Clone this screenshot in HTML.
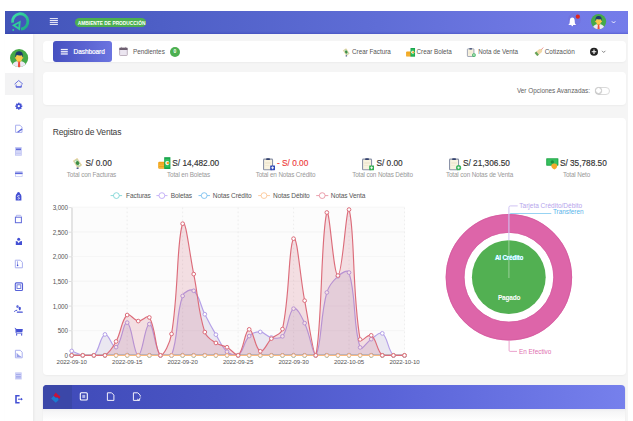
<!DOCTYPE html>
<html><head><meta charset="utf-8">
<style>
*{box-sizing:border-box;margin:0;padding:0}
html,body{width:633px;height:421px;overflow:hidden;background:#fff;font-family:"Liberation Sans",sans-serif;color:#555}
.abs{position:absolute}
#hdr{left:5px;top:11px;width:623px;height:22.5px;box-shadow:inset 0 -2px 2px -1px rgba(40,50,170,0.35);background:linear-gradient(90deg,#4254b8 0%,#4e5fc6 25%,#5f6dd6 60%,#727ae6 90%,#747cea 100%)}
#side{left:5px;top:33.5px;width:28px;height:388px;background:#fff;box-shadow:0.5px 0 2.5px rgba(0,0,0,0.06)}
#main{left:33px;top:33.5px;width:595px;height:388px;background:#f5f5f5}
.card{position:absolute;background:#fff;border-radius:4px;box-shadow:0 1px 2px rgba(0,0,0,0.04)}
#c1{left:42.6px;top:41.2px;width:583px;height:20.9px}
#c2{left:42.6px;top:72px;width:583px;height:32.7px}
#c3{left:42.6px;top:118.1px;width:583px;height:256.9px}
#c4{left:42.9px;top:408.8px;width:582px;height:20px;border-radius:0;background:linear-gradient(#eeeef0,#f6f6f7 3px,#fbfbfb 8px,#fff 12px)}
#bar{left:42.9px;top:385.3px;width:582px;height:23.5px;border-radius:4px 4px 0 0;box-shadow:0 1px 1.5px rgba(40,40,90,0.25);background:linear-gradient(90deg,#3f4ab8 0%,#4a55c4 30%,#5a64d8 60%,#7680ec 100%)}
#dash{left:53px;top:41.4px;width:59px;height:20.6px;border-radius:3px;background:linear-gradient(90deg,#4650c0,#6b74e0)}
.t{position:absolute;white-space:nowrap;line-height:1}
.sv{position:absolute;overflow:visible}
.val{position:absolute;white-space:nowrap;line-height:1;font-size:8.27px;font-weight:normal;color:#333;-webkit-text-stroke:0.15px currentColor}
.lbl{position:absolute;white-space:nowrap;line-height:1;font-size:6.35px;letter-spacing:-0.14px;color:#999;text-align:center;width:97px}
.lg{position:absolute;white-space:nowrap;line-height:1;font-size:6.55px;letter-spacing:-0.1px;color:#555}
.yl{position:absolute;white-space:nowrap;line-height:1;font-size:6.3px;letter-spacing:-0.12px;color:#555;text-align:right;width:30px}
.xl{position:absolute;white-space:nowrap;line-height:1;font-size:6.1px;letter-spacing:-0.1px;color:#555;text-align:center;width:40px}
</style></head><body>
<div id="hdr" class="abs"></div>
<div id="main" class="abs"></div>
<div id="side" class="abs"></div>
<div class="abs" style="left:5px;top:72.8px;width:28px;height:22px;background:#f3f3f4"></div>
<div id="c1" class="card"></div>
<div id="c2" class="card"></div>
<div id="c3" class="card"></div>
<div id="bar" class="abs"></div>
<div class="abs" style="left:42.9px;top:385.3px;width:29.3px;height:23.5px;border-radius:4px 0 0 0;background:#3b47a8"></div>
<div id="c4" class="card"></div>
<div id="dash" class="abs"></div>
<svg class="abs" style="left:0;top:0" width="633" height="421" viewBox="0 0 633 421">
<!-- y axis -->
<rect x="72.6" y="207.6" width="332.2" height="147.8" fill="#fcfcfc"/>
<line x1="72" y1="207.5" x2="72" y2="356" stroke="#d6d6d6" stroke-width="1.3"/>
<g stroke="#cfcfcf" stroke-width="0.7"><line x1="68.8" y1="355.35" x2="71.5" y2="355.35"/><line x1="68.8" y1="330.73" x2="71.5" y2="330.73"/><line x1="68.8" y1="306.10" x2="71.5" y2="306.10"/><line x1="68.8" y1="281.48" x2="71.5" y2="281.48"/><line x1="68.8" y1="256.85" x2="71.5" y2="256.85"/><line x1="68.8" y1="232.23" x2="71.5" y2="232.23"/><line x1="68.8" y1="207.60" x2="71.5" y2="207.60"/></g>
<line x1="71.7" y1="355.35" x2="404.5" y2="355.35" stroke="#f0f0f0" stroke-width="0.6"/>
<line x1="71.7" y1="330.65" x2="404.5" y2="330.65" stroke="#f0f0f0" stroke-width="0.6"/>
<line x1="71.7" y1="305.95" x2="404.5" y2="305.95" stroke="#f0f0f0" stroke-width="0.6"/>
<line x1="71.7" y1="281.25" x2="404.5" y2="281.25" stroke="#f0f0f0" stroke-width="0.6"/>
<line x1="71.7" y1="256.55" x2="404.5" y2="256.55" stroke="#f0f0f0" stroke-width="0.6"/>
<line x1="71.7" y1="231.86" x2="404.5" y2="231.86" stroke="#f0f0f0" stroke-width="0.6"/>
<line x1="71.7" y1="207.16" x2="404.5" y2="207.16" stroke="#f0f0f0" stroke-width="0.6"/>
<line x1="127.17" y1="207.6" x2="127.17" y2="355.35" stroke="#e6e6e6" stroke-width="0.7" stroke-dasharray="1.6,2.4"/>
<line x1="182.63" y1="207.6" x2="182.63" y2="355.35" stroke="#e6e6e6" stroke-width="0.7" stroke-dasharray="1.6,2.4"/>
<line x1="238.10" y1="207.6" x2="238.10" y2="355.35" stroke="#e6e6e6" stroke-width="0.7" stroke-dasharray="1.6,2.4"/>
<line x1="293.56" y1="207.6" x2="293.56" y2="355.35" stroke="#e6e6e6" stroke-width="0.7" stroke-dasharray="1.6,2.4"/>
<line x1="349.03" y1="207.6" x2="349.03" y2="355.35" stroke="#e6e6e6" stroke-width="0.7" stroke-dasharray="1.6,2.4"/>
<line x1="404.49" y1="207.6" x2="404.49" y2="355.35" stroke="#e6e6e6" stroke-width="0.7" stroke-dasharray="1.6,2.4"/>
<path d="M71.70,355.35C76.14,355.35 78.36,355.35 82.79,355.35C87.23,355.35 89.45,355.35 93.89,355.35C98.32,355.35 100.54,355.35 104.98,355.35C109.42,355.35 111.63,355.35 116.07,355.35C120.51,355.35 122.73,355.35 127.17,355.35C131.60,355.35 133.82,355.35 138.26,355.35C142.70,355.35 144.91,355.35 149.35,355.35C153.79,355.35 156.01,355.35 160.44,355.35C164.88,355.35 167.10,355.35 171.54,355.35C175.97,355.35 178.19,355.35 182.63,355.35C187.07,355.35 189.29,355.35 193.72,355.35C198.16,355.35 200.38,355.35 204.82,355.35C209.25,355.35 211.47,355.35 215.91,355.35C220.35,355.35 222.56,355.35 227.00,355.35C231.44,355.35 233.66,355.35 238.10,355.35C242.53,355.35 244.75,355.35 249.19,355.35C253.63,355.35 255.84,355.35 260.28,355.35C264.72,355.35 266.94,355.35 271.37,355.35C275.81,355.35 278.03,355.35 282.47,355.35C286.90,355.35 289.12,355.35 293.56,355.35C298.00,355.35 300.22,355.35 304.65,355.35C309.09,355.35 311.31,355.35 315.75,355.35C320.18,355.35 322.40,355.35 326.84,355.35C331.28,355.35 333.49,355.35 337.93,355.35C342.37,355.35 344.59,355.35 349.02,355.35C353.46,355.35 355.68,355.35 360.12,355.35C364.56,355.35 366.77,355.35 371.21,355.35C375.65,355.35 377.87,355.35 382.30,355.35C386.74,355.35 388.96,355.35 393.40,355.35C397.83,355.35 400.05,355.35 404.49,355.35" fill="none" stroke="rgb(75,192,192)" stroke-width="1.2"/>
<circle cx="71.70" cy="355.35" r="1.85" fill="#fff" stroke="rgb(75,192,192)" stroke-width="1.0"/>
<circle cx="82.79" cy="355.35" r="1.85" fill="#fff" stroke="rgb(75,192,192)" stroke-width="1.0"/>
<circle cx="93.89" cy="355.35" r="1.85" fill="#fff" stroke="rgb(75,192,192)" stroke-width="1.0"/>
<circle cx="104.98" cy="355.35" r="1.85" fill="#fff" stroke="rgb(75,192,192)" stroke-width="1.0"/>
<circle cx="116.07" cy="355.35" r="1.85" fill="#fff" stroke="rgb(75,192,192)" stroke-width="1.0"/>
<circle cx="127.17" cy="355.35" r="1.85" fill="#fff" stroke="rgb(75,192,192)" stroke-width="1.0"/>
<circle cx="138.26" cy="355.35" r="1.85" fill="#fff" stroke="rgb(75,192,192)" stroke-width="1.0"/>
<circle cx="149.35" cy="355.35" r="1.85" fill="#fff" stroke="rgb(75,192,192)" stroke-width="1.0"/>
<circle cx="160.44" cy="355.35" r="1.85" fill="#fff" stroke="rgb(75,192,192)" stroke-width="1.0"/>
<circle cx="171.54" cy="355.35" r="1.85" fill="#fff" stroke="rgb(75,192,192)" stroke-width="1.0"/>
<circle cx="182.63" cy="355.35" r="1.85" fill="#fff" stroke="rgb(75,192,192)" stroke-width="1.0"/>
<circle cx="193.72" cy="355.35" r="1.85" fill="#fff" stroke="rgb(75,192,192)" stroke-width="1.0"/>
<circle cx="204.82" cy="355.35" r="1.85" fill="#fff" stroke="rgb(75,192,192)" stroke-width="1.0"/>
<circle cx="215.91" cy="355.35" r="1.85" fill="#fff" stroke="rgb(75,192,192)" stroke-width="1.0"/>
<circle cx="227.00" cy="355.35" r="1.85" fill="#fff" stroke="rgb(75,192,192)" stroke-width="1.0"/>
<circle cx="238.10" cy="355.35" r="1.85" fill="#fff" stroke="rgb(75,192,192)" stroke-width="1.0"/>
<circle cx="249.19" cy="355.35" r="1.85" fill="#fff" stroke="rgb(75,192,192)" stroke-width="1.0"/>
<circle cx="260.28" cy="355.35" r="1.85" fill="#fff" stroke="rgb(75,192,192)" stroke-width="1.0"/>
<circle cx="271.37" cy="355.35" r="1.85" fill="#fff" stroke="rgb(75,192,192)" stroke-width="1.0"/>
<circle cx="282.47" cy="355.35" r="1.85" fill="#fff" stroke="rgb(75,192,192)" stroke-width="1.0"/>
<circle cx="293.56" cy="355.35" r="1.85" fill="#fff" stroke="rgb(75,192,192)" stroke-width="1.0"/>
<circle cx="304.65" cy="355.35" r="1.85" fill="#fff" stroke="rgb(75,192,192)" stroke-width="1.0"/>
<circle cx="315.75" cy="355.35" r="1.85" fill="#fff" stroke="rgb(75,192,192)" stroke-width="1.0"/>
<circle cx="326.84" cy="355.35" r="1.85" fill="#fff" stroke="rgb(75,192,192)" stroke-width="1.0"/>
<circle cx="337.93" cy="355.35" r="1.85" fill="#fff" stroke="rgb(75,192,192)" stroke-width="1.0"/>
<circle cx="349.02" cy="355.35" r="1.85" fill="#fff" stroke="rgb(75,192,192)" stroke-width="1.0"/>
<circle cx="360.12" cy="355.35" r="1.85" fill="#fff" stroke="rgb(75,192,192)" stroke-width="1.0"/>
<circle cx="371.21" cy="355.35" r="1.85" fill="#fff" stroke="rgb(75,192,192)" stroke-width="1.0"/>
<circle cx="382.30" cy="355.35" r="1.85" fill="#fff" stroke="rgb(75,192,192)" stroke-width="1.0"/>
<circle cx="393.40" cy="355.35" r="1.85" fill="#fff" stroke="rgb(75,192,192)" stroke-width="1.0"/>
<circle cx="404.49" cy="355.35" r="1.85" fill="#fff" stroke="rgb(75,192,192)" stroke-width="1.0"/>
<path d="M71.70,355.35C76.14,355.35 78.36,355.35 82.79,355.35C87.23,355.35 89.45,355.35 93.89,355.35C98.32,355.35 100.54,355.35 104.98,355.35C109.42,355.35 111.63,355.35 116.07,355.35C120.51,355.35 122.73,355.35 127.17,355.35C131.60,355.35 133.82,355.35 138.26,355.35C142.70,355.35 144.91,355.35 149.35,355.35C153.79,355.35 156.01,355.35 160.44,355.35C164.88,355.35 167.10,355.35 171.54,355.35C175.97,355.35 178.19,355.35 182.63,355.35C187.07,355.35 189.29,355.35 193.72,355.35C198.16,355.35 200.38,355.35 204.82,355.35C209.25,355.35 211.47,355.35 215.91,355.35C220.35,355.35 222.56,355.35 227.00,355.35C231.44,355.35 233.66,355.35 238.10,355.35C242.53,355.35 244.75,355.35 249.19,355.35C253.63,355.35 255.84,355.35 260.28,355.35C264.72,355.35 266.94,355.35 271.37,355.35C275.81,355.35 278.03,355.35 282.47,355.35C286.90,355.35 289.12,355.35 293.56,355.35C298.00,355.35 300.22,355.35 304.65,355.35C309.09,355.35 311.31,355.35 315.75,355.35C320.18,355.35 322.40,355.35 326.84,355.35C331.28,355.35 333.49,355.35 337.93,355.35C342.37,355.35 344.59,355.35 349.02,355.35C353.46,355.35 355.68,355.35 360.12,355.35C364.56,355.35 366.77,355.35 371.21,355.35C375.65,355.35 377.87,355.35 382.30,355.35C386.74,355.35 388.96,355.35 393.40,355.35C397.83,355.35 400.05,355.35 404.49,355.35" fill="none" stroke="rgb(54,162,235)" stroke-width="1.2"/>
<circle cx="71.70" cy="355.35" r="1.85" fill="#fff" stroke="rgb(54,162,235)" stroke-width="1.0"/>
<circle cx="82.79" cy="355.35" r="1.85" fill="#fff" stroke="rgb(54,162,235)" stroke-width="1.0"/>
<circle cx="93.89" cy="355.35" r="1.85" fill="#fff" stroke="rgb(54,162,235)" stroke-width="1.0"/>
<circle cx="104.98" cy="355.35" r="1.85" fill="#fff" stroke="rgb(54,162,235)" stroke-width="1.0"/>
<circle cx="116.07" cy="355.35" r="1.85" fill="#fff" stroke="rgb(54,162,235)" stroke-width="1.0"/>
<circle cx="127.17" cy="355.35" r="1.85" fill="#fff" stroke="rgb(54,162,235)" stroke-width="1.0"/>
<circle cx="138.26" cy="355.35" r="1.85" fill="#fff" stroke="rgb(54,162,235)" stroke-width="1.0"/>
<circle cx="149.35" cy="355.35" r="1.85" fill="#fff" stroke="rgb(54,162,235)" stroke-width="1.0"/>
<circle cx="160.44" cy="355.35" r="1.85" fill="#fff" stroke="rgb(54,162,235)" stroke-width="1.0"/>
<circle cx="171.54" cy="355.35" r="1.85" fill="#fff" stroke="rgb(54,162,235)" stroke-width="1.0"/>
<circle cx="182.63" cy="355.35" r="1.85" fill="#fff" stroke="rgb(54,162,235)" stroke-width="1.0"/>
<circle cx="193.72" cy="355.35" r="1.85" fill="#fff" stroke="rgb(54,162,235)" stroke-width="1.0"/>
<circle cx="204.82" cy="355.35" r="1.85" fill="#fff" stroke="rgb(54,162,235)" stroke-width="1.0"/>
<circle cx="215.91" cy="355.35" r="1.85" fill="#fff" stroke="rgb(54,162,235)" stroke-width="1.0"/>
<circle cx="227.00" cy="355.35" r="1.85" fill="#fff" stroke="rgb(54,162,235)" stroke-width="1.0"/>
<circle cx="238.10" cy="355.35" r="1.85" fill="#fff" stroke="rgb(54,162,235)" stroke-width="1.0"/>
<circle cx="249.19" cy="355.35" r="1.85" fill="#fff" stroke="rgb(54,162,235)" stroke-width="1.0"/>
<circle cx="260.28" cy="355.35" r="1.85" fill="#fff" stroke="rgb(54,162,235)" stroke-width="1.0"/>
<circle cx="271.37" cy="355.35" r="1.85" fill="#fff" stroke="rgb(54,162,235)" stroke-width="1.0"/>
<circle cx="282.47" cy="355.35" r="1.85" fill="#fff" stroke="rgb(54,162,235)" stroke-width="1.0"/>
<circle cx="293.56" cy="355.35" r="1.85" fill="#fff" stroke="rgb(54,162,235)" stroke-width="1.0"/>
<circle cx="304.65" cy="355.35" r="1.85" fill="#fff" stroke="rgb(54,162,235)" stroke-width="1.0"/>
<circle cx="315.75" cy="355.35" r="1.85" fill="#fff" stroke="rgb(54,162,235)" stroke-width="1.0"/>
<circle cx="326.84" cy="355.35" r="1.85" fill="#fff" stroke="rgb(54,162,235)" stroke-width="1.0"/>
<circle cx="337.93" cy="355.35" r="1.85" fill="#fff" stroke="rgb(54,162,235)" stroke-width="1.0"/>
<circle cx="349.02" cy="355.35" r="1.85" fill="#fff" stroke="rgb(54,162,235)" stroke-width="1.0"/>
<circle cx="360.12" cy="355.35" r="1.85" fill="#fff" stroke="rgb(54,162,235)" stroke-width="1.0"/>
<circle cx="371.21" cy="355.35" r="1.85" fill="#fff" stroke="rgb(54,162,235)" stroke-width="1.0"/>
<circle cx="382.30" cy="355.35" r="1.85" fill="#fff" stroke="rgb(54,162,235)" stroke-width="1.0"/>
<circle cx="393.40" cy="355.35" r="1.85" fill="#fff" stroke="rgb(54,162,235)" stroke-width="1.0"/>
<circle cx="404.49" cy="355.35" r="1.85" fill="#fff" stroke="rgb(54,162,235)" stroke-width="1.0"/>
<path d="M71.70,350.95C76.14,352.71 78.19,354.44 82.79,355.35C87.07,355.35 91.05,355.35 93.89,355.35C99.93,349.66 99.80,336.37 104.98,334.45C108.67,333.09 112.65,348.97 116.07,347.15C121.53,344.25 123.28,321.21 127.17,322.65C132.15,324.49 133.73,355.06 138.26,355.35C142.61,355.35 144.91,324.08 149.35,324.08C153.79,324.08 153.79,345.98 160.44,355.35C162.67,355.35 170.16,355.35 171.54,355.35C179.03,335.28 175.25,317.45 182.63,295.97C184.13,291.62 190.88,288.44 193.72,290.79C199.75,295.75 200.13,304.99 204.82,314.25C209.01,322.54 211.18,326.66 215.91,334.65C220.06,341.66 221.36,346.48 227.00,351.74C230.23,354.76 235.04,355.35 238.10,355.35C243.92,351.24 243.40,342.20 249.19,336.08C252.27,332.83 255.95,331.65 260.28,331.94C264.83,332.24 266.70,336.64 271.37,337.57C275.57,338.40 280.05,339.48 282.47,336.33C288.92,327.92 288.05,311.94 293.56,308.67C296.93,306.67 301.56,316.63 304.65,323.14C310.43,335.30 312.66,355.35 315.75,355.35C321.53,347.35 320.05,316.66 326.84,292.47C328.92,285.04 332.38,281.30 337.93,276.31C341.25,273.33 347.84,268.75 349.02,272.56C356.71,297.20 352.62,324.93 360.12,347.45C361.49,351.57 366.55,342.11 371.21,339.15C375.42,336.48 379.31,331.18 382.30,333.37C388.19,337.67 387.28,349.29 393.40,355.35C396.15,355.35 400.05,355.35 404.49,355.35L404.49,355.35L71.70,355.35Z" fill="rgba(125,105,175,0.14)"/>
<path d="M71.70,350.95C76.14,352.71 78.19,354.44 82.79,355.35C87.07,355.35 91.05,355.35 93.89,355.35C99.93,349.66 99.80,336.37 104.98,334.45C108.67,333.09 112.65,348.97 116.07,347.15C121.53,344.25 123.28,321.21 127.17,322.65C132.15,324.49 133.73,355.06 138.26,355.35C142.61,355.35 144.91,324.08 149.35,324.08C153.79,324.08 153.79,345.98 160.44,355.35C162.67,355.35 170.16,355.35 171.54,355.35C179.03,335.28 175.25,317.45 182.63,295.97C184.13,291.62 190.88,288.44 193.72,290.79C199.75,295.75 200.13,304.99 204.82,314.25C209.01,322.54 211.18,326.66 215.91,334.65C220.06,341.66 221.36,346.48 227.00,351.74C230.23,354.76 235.04,355.35 238.10,355.35C243.92,351.24 243.40,342.20 249.19,336.08C252.27,332.83 255.95,331.65 260.28,331.94C264.83,332.24 266.70,336.64 271.37,337.57C275.57,338.40 280.05,339.48 282.47,336.33C288.92,327.92 288.05,311.94 293.56,308.67C296.93,306.67 301.56,316.63 304.65,323.14C310.43,335.30 312.66,355.35 315.75,355.35C321.53,347.35 320.05,316.66 326.84,292.47C328.92,285.04 332.38,281.30 337.93,276.31C341.25,273.33 347.84,268.75 349.02,272.56C356.71,297.20 352.62,324.93 360.12,347.45C361.49,351.57 366.55,342.11 371.21,339.15C375.42,336.48 379.31,331.18 382.30,333.37C388.19,337.67 387.28,349.29 393.40,355.35C396.15,355.35 400.05,355.35 404.49,355.35" fill="none" stroke="rgb(180,160,232)" stroke-width="1.15"/>
<circle cx="71.70" cy="350.95" r="1.85" fill="#fff" stroke="rgb(180,160,232)" stroke-width="1.0"/>
<circle cx="82.79" cy="355.35" r="1.85" fill="#fff" stroke="rgb(180,160,232)" stroke-width="1.0"/>
<circle cx="93.89" cy="355.35" r="1.85" fill="#fff" stroke="rgb(180,160,232)" stroke-width="1.0"/>
<circle cx="104.98" cy="334.45" r="1.85" fill="#fff" stroke="rgb(180,160,232)" stroke-width="1.0"/>
<circle cx="116.07" cy="347.15" r="1.85" fill="#fff" stroke="rgb(180,160,232)" stroke-width="1.0"/>
<circle cx="127.17" cy="322.65" r="1.85" fill="#fff" stroke="rgb(180,160,232)" stroke-width="1.0"/>
<circle cx="138.26" cy="355.35" r="1.85" fill="#fff" stroke="rgb(180,160,232)" stroke-width="1.0"/>
<circle cx="149.35" cy="324.08" r="1.85" fill="#fff" stroke="rgb(180,160,232)" stroke-width="1.0"/>
<circle cx="160.44" cy="355.35" r="1.85" fill="#fff" stroke="rgb(180,160,232)" stroke-width="1.0"/>
<circle cx="171.54" cy="355.35" r="1.85" fill="#fff" stroke="rgb(180,160,232)" stroke-width="1.0"/>
<circle cx="182.63" cy="295.97" r="1.85" fill="#fff" stroke="rgb(180,160,232)" stroke-width="1.0"/>
<circle cx="193.72" cy="290.79" r="1.85" fill="#fff" stroke="rgb(180,160,232)" stroke-width="1.0"/>
<circle cx="204.82" cy="314.25" r="1.85" fill="#fff" stroke="rgb(180,160,232)" stroke-width="1.0"/>
<circle cx="215.91" cy="334.65" r="1.85" fill="#fff" stroke="rgb(180,160,232)" stroke-width="1.0"/>
<circle cx="227.00" cy="351.74" r="1.85" fill="#fff" stroke="rgb(180,160,232)" stroke-width="1.0"/>
<circle cx="238.10" cy="355.35" r="1.85" fill="#fff" stroke="rgb(180,160,232)" stroke-width="1.0"/>
<circle cx="249.19" cy="336.08" r="1.85" fill="#fff" stroke="rgb(180,160,232)" stroke-width="1.0"/>
<circle cx="260.28" cy="331.94" r="1.85" fill="#fff" stroke="rgb(180,160,232)" stroke-width="1.0"/>
<circle cx="271.37" cy="337.57" r="1.85" fill="#fff" stroke="rgb(180,160,232)" stroke-width="1.0"/>
<circle cx="282.47" cy="336.33" r="1.85" fill="#fff" stroke="rgb(180,160,232)" stroke-width="1.0"/>
<circle cx="293.56" cy="308.67" r="1.85" fill="#fff" stroke="rgb(180,160,232)" stroke-width="1.0"/>
<circle cx="304.65" cy="323.14" r="1.85" fill="#fff" stroke="rgb(180,160,232)" stroke-width="1.0"/>
<circle cx="315.75" cy="355.35" r="1.85" fill="#fff" stroke="rgb(180,160,232)" stroke-width="1.0"/>
<circle cx="326.84" cy="292.47" r="1.85" fill="#fff" stroke="rgb(180,160,232)" stroke-width="1.0"/>
<circle cx="337.93" cy="276.31" r="1.85" fill="#fff" stroke="rgb(180,160,232)" stroke-width="1.0"/>
<circle cx="349.02" cy="272.56" r="1.85" fill="#fff" stroke="rgb(180,160,232)" stroke-width="1.0"/>
<circle cx="360.12" cy="347.45" r="1.85" fill="#fff" stroke="rgb(180,160,232)" stroke-width="1.0"/>
<circle cx="371.21" cy="339.15" r="1.85" fill="#fff" stroke="rgb(180,160,232)" stroke-width="1.0"/>
<circle cx="382.30" cy="333.37" r="1.85" fill="#fff" stroke="rgb(180,160,232)" stroke-width="1.0"/>
<circle cx="393.40" cy="355.35" r="1.85" fill="#fff" stroke="rgb(180,160,232)" stroke-width="1.0"/>
<circle cx="404.49" cy="355.35" r="1.85" fill="#fff" stroke="rgb(180,160,232)" stroke-width="1.0"/>
<path d="M71.70,355.35C76.14,355.35 78.36,355.35 82.79,355.35C87.23,355.35 89.45,355.35 93.89,355.35C98.32,355.35 100.54,355.35 104.98,355.35C109.42,355.35 111.63,355.35 116.07,355.35C120.51,355.35 122.73,355.35 127.17,355.35C131.60,355.35 133.82,355.35 138.26,355.35C142.70,355.35 144.91,355.35 149.35,355.35C153.79,355.35 156.01,355.35 160.44,355.35C164.88,355.35 167.10,355.35 171.54,355.35C175.97,355.35 178.19,355.35 182.63,355.35C187.07,355.35 189.29,355.35 193.72,355.35C198.16,355.35 200.38,355.35 204.82,355.35C209.25,355.35 211.47,355.35 215.91,355.35C220.35,355.35 222.56,355.35 227.00,355.35C231.44,355.35 233.66,355.35 238.10,355.35C242.53,355.35 244.75,355.35 249.19,355.35C253.63,355.35 255.84,355.35 260.28,355.35C264.72,355.35 266.94,355.35 271.37,355.35C275.81,355.35 278.03,355.35 282.47,355.35C286.90,355.35 289.12,355.35 293.56,355.35C298.00,355.35 300.22,355.35 304.65,355.35C309.09,355.35 311.31,355.35 315.75,355.35C320.18,355.35 322.40,355.35 326.84,355.35C331.28,355.35 333.49,355.35 337.93,355.35C342.37,355.35 344.59,355.35 349.02,355.35C353.46,355.35 355.68,355.35 360.12,355.35C364.56,355.35 366.77,355.35 371.21,355.35C375.65,355.35 377.87,355.35 382.30,355.35C386.74,355.35 388.96,355.35 393.40,355.35C397.83,355.35 400.05,355.35 404.49,355.35" fill="none" stroke="rgb(250,190,130)" stroke-width="1.2"/>
<circle cx="71.70" cy="355.35" r="1.85" fill="#fff" stroke="rgb(250,190,130)" stroke-width="1.0"/>
<circle cx="82.79" cy="355.35" r="1.85" fill="#fff" stroke="rgb(250,190,130)" stroke-width="1.0"/>
<circle cx="93.89" cy="355.35" r="1.85" fill="#fff" stroke="rgb(250,190,130)" stroke-width="1.0"/>
<circle cx="104.98" cy="355.35" r="1.85" fill="#fff" stroke="rgb(250,190,130)" stroke-width="1.0"/>
<circle cx="116.07" cy="355.35" r="1.85" fill="#fff" stroke="rgb(250,190,130)" stroke-width="1.0"/>
<circle cx="127.17" cy="355.35" r="1.85" fill="#fff" stroke="rgb(250,190,130)" stroke-width="1.0"/>
<circle cx="138.26" cy="355.35" r="1.85" fill="#fff" stroke="rgb(250,190,130)" stroke-width="1.0"/>
<circle cx="149.35" cy="355.35" r="1.85" fill="#fff" stroke="rgb(250,190,130)" stroke-width="1.0"/>
<circle cx="160.44" cy="355.35" r="1.85" fill="#fff" stroke="rgb(250,190,130)" stroke-width="1.0"/>
<circle cx="171.54" cy="355.35" r="1.85" fill="#fff" stroke="rgb(250,190,130)" stroke-width="1.0"/>
<circle cx="182.63" cy="355.35" r="1.85" fill="#fff" stroke="rgb(250,190,130)" stroke-width="1.0"/>
<circle cx="193.72" cy="355.35" r="1.85" fill="#fff" stroke="rgb(250,190,130)" stroke-width="1.0"/>
<circle cx="204.82" cy="355.35" r="1.85" fill="#fff" stroke="rgb(250,190,130)" stroke-width="1.0"/>
<circle cx="215.91" cy="355.35" r="1.85" fill="#fff" stroke="rgb(250,190,130)" stroke-width="1.0"/>
<circle cx="227.00" cy="355.35" r="1.85" fill="#fff" stroke="rgb(250,190,130)" stroke-width="1.0"/>
<circle cx="238.10" cy="355.35" r="1.85" fill="#fff" stroke="rgb(250,190,130)" stroke-width="1.0"/>
<circle cx="249.19" cy="355.35" r="1.85" fill="#fff" stroke="rgb(250,190,130)" stroke-width="1.0"/>
<circle cx="260.28" cy="355.35" r="1.85" fill="#fff" stroke="rgb(250,190,130)" stroke-width="1.0"/>
<circle cx="271.37" cy="355.35" r="1.85" fill="#fff" stroke="rgb(250,190,130)" stroke-width="1.0"/>
<circle cx="282.47" cy="355.35" r="1.85" fill="#fff" stroke="rgb(250,190,130)" stroke-width="1.0"/>
<circle cx="293.56" cy="355.35" r="1.85" fill="#fff" stroke="rgb(250,190,130)" stroke-width="1.0"/>
<circle cx="304.65" cy="355.35" r="1.85" fill="#fff" stroke="rgb(250,190,130)" stroke-width="1.0"/>
<circle cx="315.75" cy="355.35" r="1.85" fill="#fff" stroke="rgb(250,190,130)" stroke-width="1.0"/>
<circle cx="326.84" cy="355.35" r="1.85" fill="#fff" stroke="rgb(250,190,130)" stroke-width="1.0"/>
<circle cx="337.93" cy="355.35" r="1.85" fill="#fff" stroke="rgb(250,190,130)" stroke-width="1.0"/>
<circle cx="349.02" cy="355.35" r="1.85" fill="#fff" stroke="rgb(250,190,130)" stroke-width="1.0"/>
<circle cx="360.12" cy="355.35" r="1.85" fill="#fff" stroke="rgb(250,190,130)" stroke-width="1.0"/>
<circle cx="371.21" cy="355.35" r="1.85" fill="#fff" stroke="rgb(250,190,130)" stroke-width="1.0"/>
<circle cx="382.30" cy="355.35" r="1.85" fill="#fff" stroke="rgb(250,190,130)" stroke-width="1.0"/>
<circle cx="393.40" cy="355.35" r="1.85" fill="#fff" stroke="rgb(250,190,130)" stroke-width="1.0"/>
<circle cx="404.49" cy="355.35" r="1.85" fill="#fff" stroke="rgb(250,190,130)" stroke-width="1.0"/>
<path d="M71.70,355.35C76.14,355.35 78.36,355.35 82.79,355.35C87.23,355.35 89.45,355.35 93.89,355.35C98.32,355.35 101.57,355.35 104.98,355.35C110.44,351.93 112.68,347.64 116.07,341.47C121.55,331.52 121.00,320.71 127.17,315.04C129.88,312.55 133.65,320.56 138.26,321.07C142.52,321.53 147.33,314.33 149.35,317.46C156.20,328.05 154.93,351.25 160.44,355.35C163.81,355.35 169.95,343.37 171.54,333.96C178.83,290.71 176.57,240.05 182.63,223.70C185.45,216.10 189.58,253.87 193.72,274.09C198.46,297.23 197.79,310.28 204.82,332.08C206.66,337.82 210.88,339.52 215.91,342.95C219.76,345.58 222.88,344.95 227.00,347.25C231.76,349.91 235.19,355.35 238.10,355.35C244.07,350.54 244.44,330.24 249.19,329.37C253.31,328.60 255.01,349.04 260.28,351.25C263.89,352.76 266.64,343.39 271.37,338.65C275.51,334.52 281.24,334.61 282.47,329.07C290.11,294.62 288.31,245.39 293.56,238.67C297.19,234.03 299.95,275.92 304.65,300.67C308.82,322.59 313.26,355.35 315.75,355.35C322.13,329.97 320.71,234.54 326.84,212.49C329.58,207.60 333.59,276.14 337.93,275.57C342.47,274.98 346.01,207.60 349.02,209.58C354.89,226.46 351.98,293.32 360.12,339.44C360.86,343.63 368.19,333.18 371.21,335.34C377.06,339.54 376.33,349.96 382.30,355.35C385.20,355.35 388.96,355.35 393.40,355.35C397.83,355.35 400.05,355.35 404.49,355.35L404.49,355.35L71.70,355.35Z" fill="rgba(200,80,100,0.17)"/>
<path d="M71.70,355.35C76.14,355.35 78.36,355.35 82.79,355.35C87.23,355.35 89.45,355.35 93.89,355.35C98.32,355.35 101.57,355.35 104.98,355.35C110.44,351.93 112.68,347.64 116.07,341.47C121.55,331.52 121.00,320.71 127.17,315.04C129.88,312.55 133.65,320.56 138.26,321.07C142.52,321.53 147.33,314.33 149.35,317.46C156.20,328.05 154.93,351.25 160.44,355.35C163.81,355.35 169.95,343.37 171.54,333.96C178.83,290.71 176.57,240.05 182.63,223.70C185.45,216.10 189.58,253.87 193.72,274.09C198.46,297.23 197.79,310.28 204.82,332.08C206.66,337.82 210.88,339.52 215.91,342.95C219.76,345.58 222.88,344.95 227.00,347.25C231.76,349.91 235.19,355.35 238.10,355.35C244.07,350.54 244.44,330.24 249.19,329.37C253.31,328.60 255.01,349.04 260.28,351.25C263.89,352.76 266.64,343.39 271.37,338.65C275.51,334.52 281.24,334.61 282.47,329.07C290.11,294.62 288.31,245.39 293.56,238.67C297.19,234.03 299.95,275.92 304.65,300.67C308.82,322.59 313.26,355.35 315.75,355.35C322.13,329.97 320.71,234.54 326.84,212.49C329.58,207.60 333.59,276.14 337.93,275.57C342.47,274.98 346.01,207.60 349.02,209.58C354.89,226.46 351.98,293.32 360.12,339.44C360.86,343.63 368.19,333.18 371.21,335.34C377.06,339.54 376.33,349.96 382.30,355.35C385.20,355.35 388.96,355.35 393.40,355.35C397.83,355.35 400.05,355.35 404.49,355.35" fill="none" stroke="rgb(220,108,122)" stroke-width="1.15"/>
<circle cx="71.70" cy="355.35" r="1.85" fill="#fff" stroke="rgb(220,108,122)" stroke-width="1.0"/>
<circle cx="82.79" cy="355.35" r="1.85" fill="#fff" stroke="rgb(220,108,122)" stroke-width="1.0"/>
<circle cx="93.89" cy="355.35" r="1.85" fill="#fff" stroke="rgb(220,108,122)" stroke-width="1.0"/>
<circle cx="104.98" cy="355.35" r="1.85" fill="#fff" stroke="rgb(220,108,122)" stroke-width="1.0"/>
<circle cx="116.07" cy="341.47" r="1.85" fill="#fff" stroke="rgb(220,108,122)" stroke-width="1.0"/>
<circle cx="127.17" cy="315.04" r="1.85" fill="#fff" stroke="rgb(220,108,122)" stroke-width="1.0"/>
<circle cx="138.26" cy="321.07" r="1.85" fill="#fff" stroke="rgb(220,108,122)" stroke-width="1.0"/>
<circle cx="149.35" cy="317.46" r="1.85" fill="#fff" stroke="rgb(220,108,122)" stroke-width="1.0"/>
<circle cx="160.44" cy="355.35" r="1.85" fill="#fff" stroke="rgb(220,108,122)" stroke-width="1.0"/>
<circle cx="171.54" cy="333.96" r="1.85" fill="#fff" stroke="rgb(220,108,122)" stroke-width="1.0"/>
<circle cx="182.63" cy="223.70" r="1.85" fill="#fff" stroke="rgb(220,108,122)" stroke-width="1.0"/>
<circle cx="193.72" cy="274.09" r="1.85" fill="#fff" stroke="rgb(220,108,122)" stroke-width="1.0"/>
<circle cx="204.82" cy="332.08" r="1.85" fill="#fff" stroke="rgb(220,108,122)" stroke-width="1.0"/>
<circle cx="215.91" cy="342.95" r="1.85" fill="#fff" stroke="rgb(220,108,122)" stroke-width="1.0"/>
<circle cx="227.00" cy="347.25" r="1.85" fill="#fff" stroke="rgb(220,108,122)" stroke-width="1.0"/>
<circle cx="238.10" cy="355.35" r="1.85" fill="#fff" stroke="rgb(220,108,122)" stroke-width="1.0"/>
<circle cx="249.19" cy="329.37" r="1.85" fill="#fff" stroke="rgb(220,108,122)" stroke-width="1.0"/>
<circle cx="260.28" cy="351.25" r="1.85" fill="#fff" stroke="rgb(220,108,122)" stroke-width="1.0"/>
<circle cx="271.37" cy="338.65" r="1.85" fill="#fff" stroke="rgb(220,108,122)" stroke-width="1.0"/>
<circle cx="282.47" cy="329.07" r="1.85" fill="#fff" stroke="rgb(220,108,122)" stroke-width="1.0"/>
<circle cx="293.56" cy="238.67" r="1.85" fill="#fff" stroke="rgb(220,108,122)" stroke-width="1.0"/>
<circle cx="304.65" cy="300.67" r="1.85" fill="#fff" stroke="rgb(220,108,122)" stroke-width="1.0"/>
<circle cx="315.75" cy="355.35" r="1.85" fill="#fff" stroke="rgb(220,108,122)" stroke-width="1.0"/>
<circle cx="326.84" cy="212.49" r="1.85" fill="#fff" stroke="rgb(220,108,122)" stroke-width="1.0"/>
<circle cx="337.93" cy="275.57" r="1.85" fill="#fff" stroke="rgb(220,108,122)" stroke-width="1.0"/>
<circle cx="349.02" cy="209.58" r="1.85" fill="#fff" stroke="rgb(220,108,122)" stroke-width="1.0"/>
<circle cx="360.12" cy="339.44" r="1.85" fill="#fff" stroke="rgb(220,108,122)" stroke-width="1.0"/>
<circle cx="371.21" cy="335.34" r="1.85" fill="#fff" stroke="rgb(220,108,122)" stroke-width="1.0"/>
<circle cx="382.30" cy="355.35" r="1.85" fill="#fff" stroke="rgb(220,108,122)" stroke-width="1.0"/>
<circle cx="393.40" cy="355.35" r="1.85" fill="#fff" stroke="rgb(220,108,122)" stroke-width="1.0"/>
<circle cx="404.49" cy="355.35" r="1.85" fill="#fff" stroke="rgb(220,108,122)" stroke-width="1.0"/>
<!-- doughnut -->
<circle cx="508.9" cy="277.25" r="53.85" fill="none" stroke="#dd65a9" stroke-width="18.7"/>
<circle cx="508.9" cy="277.25" r="62.8" fill="none" stroke="#d45b9f" stroke-width="0.7"/><circle cx="508.9" cy="277.25" r="44.9" fill="none" stroke="#d45b9f" stroke-width="0.7"/>
<circle cx="508.8" cy="277.2" r="36.9" fill="#52b052"/>
<line x1="508.9" y1="206" x2="508.9" y2="278" stroke="rgba(255,255,255,0.35)" stroke-width="1.2"/>
<path d="M508.9,240 L508.9,207.5 Q508.9,205.9 510.5,205.9 L517.7,205.9" fill="none" stroke="#c4b4f0" stroke-width="0.8"/>
<path d="M509.5,214 Q510,213.5 511,213.5 L551.3,213.5" fill="none" stroke="#7cc8f0" stroke-width="0.8"/>
<path d="M509.1,340.7 L509.1,350.4 Q509.1,351.4 510.1,351.4 L517,351.4" fill="none" stroke="#e58cc0" stroke-width="0.8"/>
<!-- legend marks -->
<g fill="#fff" stroke-width="0.8">
<line x1="110.6" y1="195.6" x2="122.1" y2="195.6" stroke="#6fd0d0"/><circle cx="116.4" cy="195.6" r="2.9" stroke="#6fd0d0"/>
<line x1="156.4" y1="195.6" x2="167.5" y2="195.6" stroke="#b7a0f5"/><circle cx="161.9" cy="195.6" r="2.9" stroke="#b7a0f5"/>
<line x1="198.5" y1="195.6" x2="210" y2="195.6" stroke="#6ab8ee"/><circle cx="204.2" cy="195.6" r="2.9" stroke="#6ab8ee"/>
<line x1="258.2" y1="195.6" x2="270" y2="195.6" stroke="#fcc08a"/><circle cx="264" cy="195.6" r="2.9" stroke="#fcc08a"/>
<line x1="316.2" y1="195.6" x2="328.3" y2="195.6" stroke="#e48898"/><circle cx="322.2" cy="195.6" r="2.9" stroke="#e48898"/>
</g>
</svg>

<!-- header text -->
<div class="abs" style="left:75px;top:18px;width:71px;height:9.3px;border-radius:4.65px;background:#4caf50"></div>
<div class="t" style="left:77.8px;top:22.2px;font-size:4.8px;font-weight:bold;color:#fff;letter-spacing:0.02px">AMBIENTE DE PRODUCCIÓN</div>

<!-- tabs -->
<div class="t" style="left:73.6px;top:49.1px;font-size:6.5px;color:#fff;-webkit-text-stroke:0.2px #fff;letter-spacing:-0.07px">Dashboard</div>
<div class="t" style="left:132.9px;top:48.5px;font-size:6.4px;color:#585858">Pendientes</div>
<div class="abs" style="left:170.1px;top:46.7px;width:10px;height:10px;border-radius:5px;background:#4caf50"></div>
<div class="t" style="left:173.5px;top:49.2px;font-size:5px;font-weight:bold;color:#fff">0</div>
<div class="t" style="left:352px;top:49.4px;font-size:6.3px;color:#555">Crear Factura</div>
<div class="t" style="left:416.5px;top:49.4px;font-size:6.3px;color:#555">Crear Boleta</div>
<div class="t" style="left:478.2px;top:49.4px;font-size:6.3px;color:#555">Nota de Venta</div>
<div class="t" style="left:544.7px;top:49.4px;font-size:6.45px;color:#555">Cotización</div>

<!-- card 2 -->
<div class="t" style="left:516.9px;top:87.7px;font-size:6.4px;color:#5f5f5f">Ver Opciones Avanzadas:</div>
<div class="abs" style="left:594.8px;top:86.5px;width:15.7px;height:8px;border-radius:4px;border:0.7px solid #dadada;background:#fff"></div>
<div class="abs" style="left:595.4px;top:87.1px;width:6.8px;height:6.8px;border-radius:3.4px;border:0.7px solid #c8c8c8;background:#fff;box-shadow:0 0.5px 1px rgba(0,0,0,0.15)"></div>

<!-- card 3 title -->
<div class="t" style="left:52.8px;top:128px;font-size:8.5px;letter-spacing:-0.19px;color:#3a3a3a">Registro de Ventas</div>

<!-- stats -->
<div class="val" style="left:85.6px;top:159.6px">S/ 0.00</div>
<div class="val" style="left:172.3px;top:159.6px">S/ 14,482.00</div>
<div class="val" style="left:277px;top:159.6px;color:#ee3d3d">- S/ 0.00</div>
<div class="val" style="left:376.5px;top:159.6px">S/ 0.00</div>
<div class="val" style="left:463px;top:159.6px">S/ 21,306.50</div>
<div class="val" style="left:559.9px;top:159.6px">S/ 35,788.50</div>
<div class="lbl" style="left:43px;top:171.8px">Total con Facturas</div>
<div class="lbl" style="left:140px;top:171.8px">Total en Boletas</div>
<div class="lbl" style="left:237px;top:171.8px">Total en Notas Crédito</div>
<div class="lbl" style="left:334px;top:171.8px">Total con Notas Débito</div>
<div class="lbl" style="left:431px;top:171.8px">Total con Notas de Venta</div>
<div class="lbl" style="left:528px;top:171.8px">Total Neto</div>

<!-- legend -->
<div class="lg" style="left:126.1px;top:192.5px">Facturas</div>
<div class="lg" style="left:170.8px;top:192.5px">Boletas</div>
<div class="lg" style="left:212.8px;top:192.5px">Notas Crédito</div>
<div class="lg" style="left:273px;top:192.5px">Notas Débito</div>
<div class="lg" style="left:330.8px;top:192.5px">Notas Venta</div>

<!-- y labels -->
<div class="yl" style="left:37.8px;top:204.8px">3,000</div>
<div class="yl" style="left:37.8px;top:229.5px">2,500</div>
<div class="yl" style="left:37.8px;top:254.2px">2,000</div>
<div class="yl" style="left:37.8px;top:278.9px">1,500</div>
<div class="yl" style="left:37.8px;top:303.6px">1,000</div>
<div class="yl" style="left:37.8px;top:328.3px">500</div>
<div class="yl" style="left:37.8px;top:353.0px">0</div>
<!-- x labels -->
<div class="xl" style="left:51.7px;top:358.8px">2022-09-10</div>
<div class="xl" style="left:107.2px;top:358.8px">2022-09-15</div>
<div class="xl" style="left:162.6px;top:358.8px">2022-09-20</div>
<div class="xl" style="left:218.1px;top:358.8px">2022-09-25</div>
<div class="xl" style="left:273.6px;top:358.8px">2022-09-30</div>
<div class="xl" style="left:329px;top:358.8px">2022-10-05</div>
<div class="xl" style="left:384.5px;top:358.8px">2022-10-10</div>

<!-- doughnut labels -->
<div class="t" style="left:519.3px;top:203.2px;font-size:6.5px;color:#b6a4ec">Tarjeta Crédito/Débito</div>
<div class="t" style="left:552.9px;top:209.4px;font-size:6.4px;color:#5ab4ea">Transferen</div>
<div class="t" style="left:519px;top:348.5px;font-size:6.4px;color:#e070b0">En Efectivo</div>
<div class="t" style="left:495px;top:254.6px;font-size:6.3px;font-weight:bold;color:#fff;letter-spacing:-0.2px;text-shadow:0 0 0.8px #40d8f0,0 0 0.5px #40d8f0">Al Crédito</div>
<div class="t" style="left:497.9px;top:295.4px;font-size:6.5px;font-weight:bold;color:#fff;letter-spacing:-0.2px">Pagado</div>


<svg class="sv" style="left:10px;top:75px" width="18" height="18" viewBox="0 0 18 18"><path d="M4.9,8.9 L8.7,5.5 L12.6,8.9" fill="none" stroke="#5a64dc" stroke-width="0.9" stroke-linejoin="round" stroke-linecap="round"/><path d="M6.1,9.5 V12.2 H11.3 V9.5" fill="none" stroke="#5a64dc" stroke-width="0.9"/><rect x="6.1" y="11.3" width="5.2" height="1" fill="#4a55d6"/></svg>
<svg class="sv" style="left:10px;top:97px" width="18" height="18" viewBox="0 0 18 18"><g fill="#4450d4"><circle cx="8.8" cy="9.2" r="2.6"/><rect x="8.05" y="5.7" width="1.5" height="1.6" transform="rotate(0 8.8 9.2)"/><rect x="8.05" y="5.7" width="1.5" height="1.6" transform="rotate(45 8.8 9.2)"/><rect x="8.05" y="5.7" width="1.5" height="1.6" transform="rotate(90 8.8 9.2)"/><rect x="8.05" y="5.7" width="1.5" height="1.6" transform="rotate(135 8.8 9.2)"/><rect x="8.05" y="5.7" width="1.5" height="1.6" transform="rotate(180 8.8 9.2)"/><rect x="8.05" y="5.7" width="1.5" height="1.6" transform="rotate(225 8.8 9.2)"/><rect x="8.05" y="5.7" width="1.5" height="1.6" transform="rotate(270 8.8 9.2)"/><rect x="8.05" y="5.7" width="1.5" height="1.6" transform="rotate(315 8.8 9.2)"/></g><circle cx="8.8" cy="9.2" r="1.15" fill="#fff"/></svg>
<svg class="sv" style="left:10px;top:120px" width="18" height="18" viewBox="0 0 18 18"><path d="M5.6,5.2 H10 L12,7.2 V12.4 H5.6 Z" fill="none" stroke="#aab0ef" stroke-width="1"/><path d="M7,12 L11.5,8.6 L12.6,9.6 L8.2,12.6 Z" fill="#4450d4" opacity="0.85"/></svg>
<svg class="sv" style="left:10px;top:143px" width="18" height="18" viewBox="0 0 18 18"><rect x="5" y="4" width="6.8" height="8.8" rx="0.6" fill="#c3c7f4"/><rect x="6" y="5.6" width="5" height="1.4" fill="#4450d4" opacity="0.8"/><g fill="#fff" opacity="0.6"><rect x="6" y="8" width="5" height="0.5"/><rect x="6" y="9.6" width="5" height="0.5"/><rect x="6" y="11.1" width="5" height="0.5"/></g></svg>
<svg class="sv" style="left:10px;top:165px" width="18" height="18" viewBox="0 0 18 18"><rect x="5" y="6" width="7.6" height="5.9" rx="0.6" fill="#c9cdf5"/><rect x="5" y="7.7" width="7.6" height="1.1" fill="#4450d4"/><rect x="6" y="9.4" width="5.8" height="1.8" fill="#fff"/></svg>
<svg class="sv" style="left:10px;top:188px" width="18" height="18" viewBox="0 0 18 18"><path d="M7.4,4.6 Q8.5,3.6 9.6,4.6 L10.2,5.8 Q11.4,6.6 11.4,8.2 V12.6 H5.7 V8.2 Q5.7,6.6 6.8,5.8 Z" fill="#4450d4"/><path d="M9.6,7.8 Q8.6,7.2 7.7,7.9 Q7.3,8.7 8.4,9.2 Q9.7,9.7 9.4,10.6 Q8.6,11.3 7.6,10.7" fill="none" stroke="#fff" stroke-width="0.8"/></svg>
<svg class="sv" style="left:10px;top:210px" width="18" height="18" viewBox="0 0 18 18"><path d="M6.4,6.6 V5.3 H10.6 L11.6,6.4" fill="none" stroke="#aab0ef" stroke-width="0.9"/><rect x="5.4" y="7.2" width="6" height="5.5" fill="none" stroke="#4450d4" stroke-width="1" opacity="0.85"/></svg>
<svg class="sv" style="left:10px;top:233px" width="18" height="18" viewBox="0 0 18 18"><circle cx="8.7" cy="6.2" r="1.5" fill="#4450d4"/><path d="M5.8,8 L7.6,8.6 L8.7,10.3 L9.8,8.6 L12,8 V11.9 H5.8 Z" fill="#4450d4"/></svg>
<svg class="sv" style="left:10px;top:255px" width="18" height="18" viewBox="0 0 18 18"><path d="M5.3,5.2 H10.4 L12.4,7.4 V12.8 H5.3 Z" fill="none" stroke="#aab0ef" stroke-width="1"/><rect x="7.2" y="6.3" width="0.8" height="4.5" fill="#4450d4" opacity="0.6"/><circle cx="7.6" cy="10.4" r="0.8" fill="#4450d4"/></svg>
<svg class="sv" style="left:10px;top:278px" width="18" height="18" viewBox="0 0 18 18"><rect x="5.3" y="4.9" width="7.2" height="7.6" rx="1" fill="none" stroke="#4450d4" stroke-width="1.1" opacity="0.9"/><rect x="7" y="6.8" width="3.8" height="3.7" fill="none" stroke="#4450d4" stroke-width="0.9" opacity="0.8"/></svg>
<svg class="sv" style="left:10px;top:300px" width="18" height="18" viewBox="0 0 18 18"><ellipse cx="7.5" cy="6.4" rx="1.2" ry="1.5" fill="#4450d4" opacity="0.8"/><path d="M8.8,7.3 Q9.8,6.4 10.8,7.4 Q11.2,9 10.2,10.3 L9.2,10.3 Q8.3,9 8.8,7.3 Z" fill="#4450d4"/><rect x="6.8" y="11.6" width="6" height="1.1" rx="0.5" fill="#4450d4"/><path d="M4.2,11.6 Q5.5,10.3 7.2,10.2" fill="none" stroke="#4450d4" stroke-width="1"/></svg>
<svg class="sv" style="left:10px;top:323px" width="18" height="18" viewBox="0 0 18 18"><path d="M4.8,5.2 L5.8,5.6 L6.1,10.1 H12.3" fill="none" stroke="#4450d4" stroke-width="0.9"/><path d="M6,6.1 H12.8 L12.4,9 H6.2 Z" fill="#4450d4"/><rect x="6" y="10.6" width="1.2" height="2" fill="#4450d4" opacity="0.85"/><rect x="11" y="10.6" width="1.2" height="2" fill="#4450d4" opacity="0.85"/></svg>
<svg class="sv" style="left:10px;top:345px" width="18" height="18" viewBox="0 0 18 18"><path d="M5.4,5.3 H10.3 L12.2,7.3 V12.8 H5.4 Z" fill="none" stroke="#aab0ef" stroke-width="1"/><path d="M6.6,7.8 L7.6,8.8 L9,10.3 L11.2,11.4 V12 H6.6 Z" fill="#4450d4" opacity="0.55"/></svg>
<svg class="sv" style="left:10px;top:367px" width="18" height="18" viewBox="0 0 18 18"><rect x="5" y="5.2" width="6.8" height="7.3" rx="0.6" fill="#cdd0f6"/><g fill="#4450d4" opacity="0.45"><rect x="6" y="7.4" width="4.8" height="0.6"/><rect x="6" y="9" width="4.8" height="0.6"/><rect x="6" y="10.6" width="4.8" height="0.6"/></g></svg>
<svg class="sv" style="left:10px;top:390px" width="18" height="18" viewBox="0 0 18 18"><path d="M9.6,5.8 H6 V12.8 H9.6" fill="none" stroke="#4450d4" stroke-width="1.6"/><path d="M8,9.2 H11.8" stroke="#4450d4" stroke-width="1"/><path d="M11,7.8 L12.8,9.2 L11,10.6 Z" fill="#4450d4"/></svg>
<svg class="sv" style="left:8px;top:9px" width="26" height="26" viewBox="8 9 26 26"><defs><linearGradient id="lg1" x1="0" y1="0" x2="1" y2="1"><stop offset="0" stop-color="#3fe0a6"/><stop offset="1" stop-color="#1aa985"/></linearGradient></defs><path d="M12.6,22.6 A7.7,7.7 0 1 1 21.0,29.1" fill="none" stroke="url(#lg1)" stroke-width="2.8"/><path d="M11.9,25.2 L20.8,20.4 L19.9,30.6 Z M15.4,25.2 L18.7,23.5 L18.4,27.3 Z" fill="#2fcf98" fill-rule="evenodd"/><circle cx="13.2" cy="30" r="0.9" fill="#2fcf98"/></svg>
<svg class="sv" style="left:48px;top:16px" width="12" height="11" viewBox="48 16 12 11"><rect x="49.8" y="18.05" width="8.1" height="1.05" fill="#e9e9f7"/><rect x="49.8" y="20.0" width="8.1" height="1.05" fill="#e9e9f7"/><rect x="49.8" y="21.9" width="8.1" height="1.05" fill="#e9e9f7"/><rect x="49.8" y="23.9" width="8.1" height="1.05" fill="#e9e9f7"/></svg>
<svg class="sv" style="left:563px;top:11px" width="20" height="18" viewBox="563 11 20 18"><circle cx="574.5" cy="19.5" r="6.5" fill="rgba(120,60,140,0.08)"/><path d="M572.25,17.4 Q574.3,17.4 574.6,19.8 L574.9,23.2 Q575.3,24.3 576.3,24.9 L568.2,24.9 Q569.2,24.3 569.6,23.2 L569.9,19.8 Q570.2,17.4 572.25,17.4 Z" fill="#fff"/><circle cx="572.25" cy="25.4" r="0.8" fill="#fff"/><circle cx="577.8" cy="16.7" r="2.1" fill="#e0261e"/></svg>
<svg class="sv" style="left:610px;top:19px" width="8" height="6" viewBox="610 19 8 6"><path d="M611.9,21.3 L613.6,23 L615.3,21.3" fill="none" stroke="#fff" stroke-width="0.9"/></svg>
<svg class="sv" style="left:9.85px;top:49.15px" width="18.20" height="18.20" viewBox="0 0 20 20"><defs><clipPath id="av1"><circle cx="10" cy="10" r="10"/></clipPath></defs><circle cx="10" cy="10" r="10" fill="#45a948"/><g clip-path="url(#av1)"><path d="M1.5,21 Q2.5,14.6 7.2,13.6 L12.8,13.6 Q17.5,14.6 18.5,21 Z" fill="#ece8f4"/><rect x="8.3" y="10.5" width="3.4" height="4" fill="#f2b230"/><path d="M9.1,13.8 L10.9,13.8 L11.4,19.5 L10,21 L8.6,19.5 Z" fill="#ef4b3b"/><ellipse cx="6.3" cy="9.6" rx="0.9" ry="1.2" fill="#f7bd3c"/><ellipse cx="13.7" cy="9.6" rx="0.9" ry="1.2" fill="#f7bd3c"/><path d="M6.7,7 H13.3 V10.6 Q13.3,13.4 10,13.6 Q6.7,13.4 6.7,10.6 Z" fill="#fcc84c"/><path d="M5.9,9.6 Q5.2,2.4 10,2.6 Q14.8,2.4 14.1,9.6 Q13.5,7.6 13.2,6.9 Q10,7.4 7.4,6.2 Q6.6,7.6 5.9,9.6 Z" fill="#1f3a6d"/></g></svg>
<svg class="sv" style="left:591.00px;top:14.00px" width="15.20" height="15.20" viewBox="0 0 20 20"><defs><clipPath id="av2"><circle cx="10" cy="10" r="10"/></clipPath></defs><circle cx="10" cy="10" r="10" fill="#45a948"/><g clip-path="url(#av2)"><path d="M1.5,21 Q2.5,14.6 7.2,13.6 L12.8,13.6 Q17.5,14.6 18.5,21 Z" fill="#ece8f4"/><rect x="8.3" y="10.5" width="3.4" height="4" fill="#f2b230"/><path d="M9.1,13.8 L10.9,13.8 L11.4,19.5 L10,21 L8.6,19.5 Z" fill="#ef4b3b"/><ellipse cx="6.3" cy="9.6" rx="0.9" ry="1.2" fill="#f7bd3c"/><ellipse cx="13.7" cy="9.6" rx="0.9" ry="1.2" fill="#f7bd3c"/><path d="M6.7,7 H13.3 V10.6 Q13.3,13.4 10,13.6 Q6.7,13.4 6.7,10.6 Z" fill="#fcc84c"/><path d="M5.9,9.6 Q5.2,2.4 10,2.6 Q14.8,2.4 14.1,9.6 Q13.5,7.6 13.2,6.9 Q10,7.4 7.4,6.2 Q6.6,7.6 5.9,9.6 Z" fill="#1f3a6d"/></g></svg>
<svg class="sv" style="left:58px;top:47px" width="12" height="10" viewBox="58 47 12 10"><rect x="60.8" y="48.9" width="7" height="1.3" fill="#fff" opacity="0.92"/><rect x="60.8" y="51.1" width="7" height="1.3" fill="#fff" opacity="0.92"/><rect x="60.8" y="53.3" width="7" height="1.3" fill="#fff" opacity="0.92"/></svg>
<svg class="sv" style="left:117px;top:45px" width="13" height="13" viewBox="117 45 13 13"><rect x="119.6" y="48" width="7.7" height="7.5" rx="0.7" fill="#ebe5f0" stroke="#a898a8" stroke-width="0.7"/><rect x="119.4" y="47.8" width="8.1" height="2.2" fill="#6d5f70"/><rect x="121" y="46.9" width="0.6" height="1.4" fill="#8a7f90"/><rect x="125.3" y="46.9" width="0.6" height="1.4" fill="#8a7f90"/></svg>
<svg class="sv" style="left:588px;top:45px" width="22" height="14" viewBox="588 45 22 14"><circle cx="594" cy="51.7" r="4" fill="#222"/><path d="M594,49.4 V54 M591.7,51.7 H596.3" stroke="#fff" stroke-width="1.1"/><path d="M602,50.8 L603.7,52.5 L605.4,50.8" fill="none" stroke="#666" stroke-width="0.8"/></svg>
<svg class="sv" style="left:72.7px;top:157.8px" width="9" height="11.6" viewBox="0 0 10 12"><g transform="rotate(-33 5 5.2)"><rect x="2.4" y="0.7" width="5.2" height="9" rx="0.4" fill="#b9dbb3" stroke="#f8c07a" stroke-width="0.9" stroke-dasharray="1,0.5"/><ellipse cx="5" cy="5.2" rx="1.9" ry="2.2" fill="#3f8d45"/><circle cx="4" cy="2.6" r="0.7" fill="#fff" opacity="0.7"/><circle cx="6" cy="7.8" r="0.7" fill="#fff" opacity="0.7"/></g><rect x="4" y="10" width="2.2" height="1.8" rx="0.3" fill="#4c5b8e"/></svg>
<svg class="sv" style="left:342.9px;top:47.8px" width="6.6" height="9.2" viewBox="0 0 10 12"><g transform="rotate(-33 5 5.2)"><rect x="2.4" y="0.7" width="5.2" height="9" rx="0.4" fill="#b9dbb3" stroke="#f8c07a" stroke-width="0.9" stroke-dasharray="1,0.5"/><ellipse cx="5" cy="5.2" rx="1.9" ry="2.2" fill="#3f8d45"/><circle cx="4" cy="2.6" r="0.7" fill="#fff" opacity="0.7"/><circle cx="6" cy="7.8" r="0.7" fill="#fff" opacity="0.7"/></g><rect x="4" y="10" width="2.2" height="1.8" rx="0.3" fill="#4c5b8e"/></svg>
<svg class="sv" style="left:157.6px;top:157.4px" width="12.6" height="12.2" viewBox="0 0 13 12.2"><g fill="#f0a418"><rect x="0.2" y="4.8" width="7" height="7.2" rx="1.2"/></g><g fill="#ffd06a" opacity="0.8"><rect x="1" y="6.8" width="5.4" height="0.5"/><rect x="1" y="8.6" width="5.4" height="0.5"/><rect x="1" y="10.4" width="5.4" height="0.5"/></g><rect x="6.4" y="0" width="6.4" height="12.2" fill="#16a34a"/><rect x="7.3" y="1.6" width="4.6" height="9" fill="#2fbf5f"/><circle cx="9.6" cy="6.1" r="2.1" fill="#fff"/><circle cx="10.2" cy="6" r="1.4" fill="#f6a623"/></svg>
<svg class="sv" style="left:406px;top:48px" width="9.2" height="8.7" viewBox="0 0 13 12.2"><g fill="#f0a418"><rect x="0.2" y="4.8" width="7" height="7.2" rx="1.2"/></g><g fill="#ffd06a" opacity="0.8"><rect x="1" y="6.8" width="5.4" height="0.5"/><rect x="1" y="8.6" width="5.4" height="0.5"/><rect x="1" y="10.4" width="5.4" height="0.5"/></g><rect x="6.4" y="0" width="6.4" height="12.2" fill="#16a34a"/><rect x="7.3" y="1.6" width="4.6" height="9" fill="#2fbf5f"/><circle cx="9.6" cy="6.1" r="2.1" fill="#fff"/><circle cx="10.2" cy="6" r="1.4" fill="#f6a623"/></svg>
<svg class="sv" style="left:263px;top:157.8px" width="12.3" height="12.4" viewBox="0 0 12.3 12.4"><rect x="0.55" y="1.1" width="9" height="10.6" rx="0.8" fill="#f8f2df" stroke="#8b93a8" stroke-width="1.1"/><rect x="3.2" y="0.2" width="3.7" height="1.8" rx="0.6" fill="#34426e"/><g fill="#e6dcc0"><rect x="2.2" y="4" width="5.6" height="0.4"/><rect x="2.2" y="5.6" width="5.6" height="0.4"/><rect x="2.2" y="7.2" width="4" height="0.4"/></g><rect x="7.2" y="7.4" width="4.8" height="4.8" rx="0.4" fill="#2d46b8"/><path d="M9.6,8.4 V11.2 M8.2,9.8 H11" stroke="#fff" stroke-width="0.9"/></svg>
<svg class="sv" style="left:361.7px;top:157.8px" width="12.3" height="12.4" viewBox="0 0 12.3 12.4"><rect x="0.55" y="1.1" width="9" height="10.6" rx="0.8" fill="#f8f2df" stroke="#8b93a8" stroke-width="1.1"/><rect x="3.2" y="0.2" width="3.7" height="1.8" rx="0.6" fill="#34426e"/><g fill="#e6dcc0"><rect x="2.2" y="4" width="5.6" height="0.4"/><rect x="2.2" y="5.6" width="5.6" height="0.4"/><rect x="2.2" y="7.2" width="4" height="0.4"/></g><rect x="7.2" y="7.4" width="4.8" height="4.8" rx="0.4" fill="#2fae4f"/><path d="M9.6,8.4 V11.2 M8.2,9.8 H11" stroke="#fff" stroke-width="0.9"/></svg>
<svg class="sv" style="left:449px;top:157.6px" width="12.3" height="12.4" viewBox="0 0 12.3 12.4"><rect x="0.55" y="1.1" width="9" height="10.6" rx="0.8" fill="#f8f2df" stroke="#8b93a8" stroke-width="1.1"/><rect x="3.2" y="0.2" width="3.7" height="1.8" rx="0.6" fill="#34426e"/><g fill="#e6dcc0"><rect x="2.2" y="4" width="5.6" height="0.4"/><rect x="2.2" y="5.6" width="5.6" height="0.4"/><rect x="2.2" y="7.2" width="4" height="0.4"/></g><circle cx="9.6" cy="9.7" r="2.6" fill="#3fb560"/><path d="M9.6,8.5 V10.9 M8.4,9.7 H10.8" stroke="#fff" stroke-width="0.8"/></svg>
<svg class="sv" style="left:467.1px;top:47.8px" width="8.9" height="9" viewBox="0 0 12.3 12.4"><rect x="0.55" y="1.1" width="9" height="10.6" rx="0.8" fill="#f8f2df" stroke="#8b93a8" stroke-width="1.1"/><rect x="3.2" y="0.2" width="3.7" height="1.8" rx="0.6" fill="#34426e"/><g fill="#e6dcc0"><rect x="2.2" y="4" width="5.6" height="0.4"/><rect x="2.2" y="5.6" width="5.6" height="0.4"/><rect x="2.2" y="7.2" width="4" height="0.4"/></g><circle cx="9.6" cy="9.7" r="2.6" fill="#3fb560"/><path d="M9.6,8.5 V10.9 M8.4,9.7 H10.8" stroke="#fff" stroke-width="0.8"/></svg>
<svg class="sv" style="left:545.8px;top:158px" width="12.6" height="11.6" viewBox="0 0 12.6 11.6"><rect x="0.2" y="0.2" width="12.2" height="7.5" rx="0.6" fill="#22a84a"/><rect x="1.2" y="1.2" width="10.2" height="5.5" fill="#36c05e"/><circle cx="6.3" cy="3.9" r="1.7" fill="#1d8f3e"/><path d="M5.2,7.6 Q6,5.4 8.2,5.6 Q10.8,5.2 11.3,7.6 Q11.2,10.6 8.4,11.4 Q5.6,10.8 5.2,7.6 Z" fill="#f6a92c"/></svg>
<svg class="sv" style="left:533.5px;top:47.2px" width="10" height="10" viewBox="0 0 10 10"><g transform="rotate(-40 5 5)"><path d="M1,3 H7.2 L9.4,5 L7.2,7 H1 Z" fill="#efd7a6"/><rect x="1" y="3" width="2.2" height="4" fill="#4a9a4a" opacity="0.85"/></g><path d="M7.2,2.6 L9.4,0.6" stroke="#e88080" stroke-width="0.8"/></svg>
<svg class="sv" style="left:50px;top:391px" width="12" height="13" viewBox="50 391 12 13"><path d="M55.8,392.6 L57.6,394.6 L60.4,396.8 L59.4,398.8 L57.8,397.6 L55.4,397.2 L53.6,395.6 Z" fill="#c8123a"/><path d="M51.1,398.4 L53.6,396 L55.6,397.8 L57.8,397.8 L58.6,400 L55.8,402.8 Z" fill="#1a7bd0"/></svg>
<svg class="sv" style="left:78px;top:391px" width="12" height="12" viewBox="78 391 12 12"><rect x="80.3" y="392.7" width="7" height="7.3" rx="1" fill="none" stroke="#fff" stroke-width="1.1"/><rect x="81.9" y="394.4" width="3.8" height="3.9" fill="#aeb4e8" stroke="#3c46b0" stroke-width="0.7"/></svg>
<svg class="sv" style="left:105px;top:391px" width="11" height="12" viewBox="105 391 11 12"><path d="M107.4,392.8 H111.6 L113.9,395.1 V400.4 H107.4 Z" fill="none" stroke="#f2f0fb" stroke-width="1"/></svg>
<svg class="sv" style="left:132px;top:391px" width="11" height="12" viewBox="132 391 11 12"><path d="M139.6,399.2 V400.4 H133.4 V392.8 H137.8 L140.2,395.1 V396.6" fill="none" stroke="#f2f0fb" stroke-width="1"/><path d="M137.2,399 L138.4,400.2 L140.6,397.6" fill="none" stroke="#fff" stroke-width="0.9"/></svg>
</body></html>
